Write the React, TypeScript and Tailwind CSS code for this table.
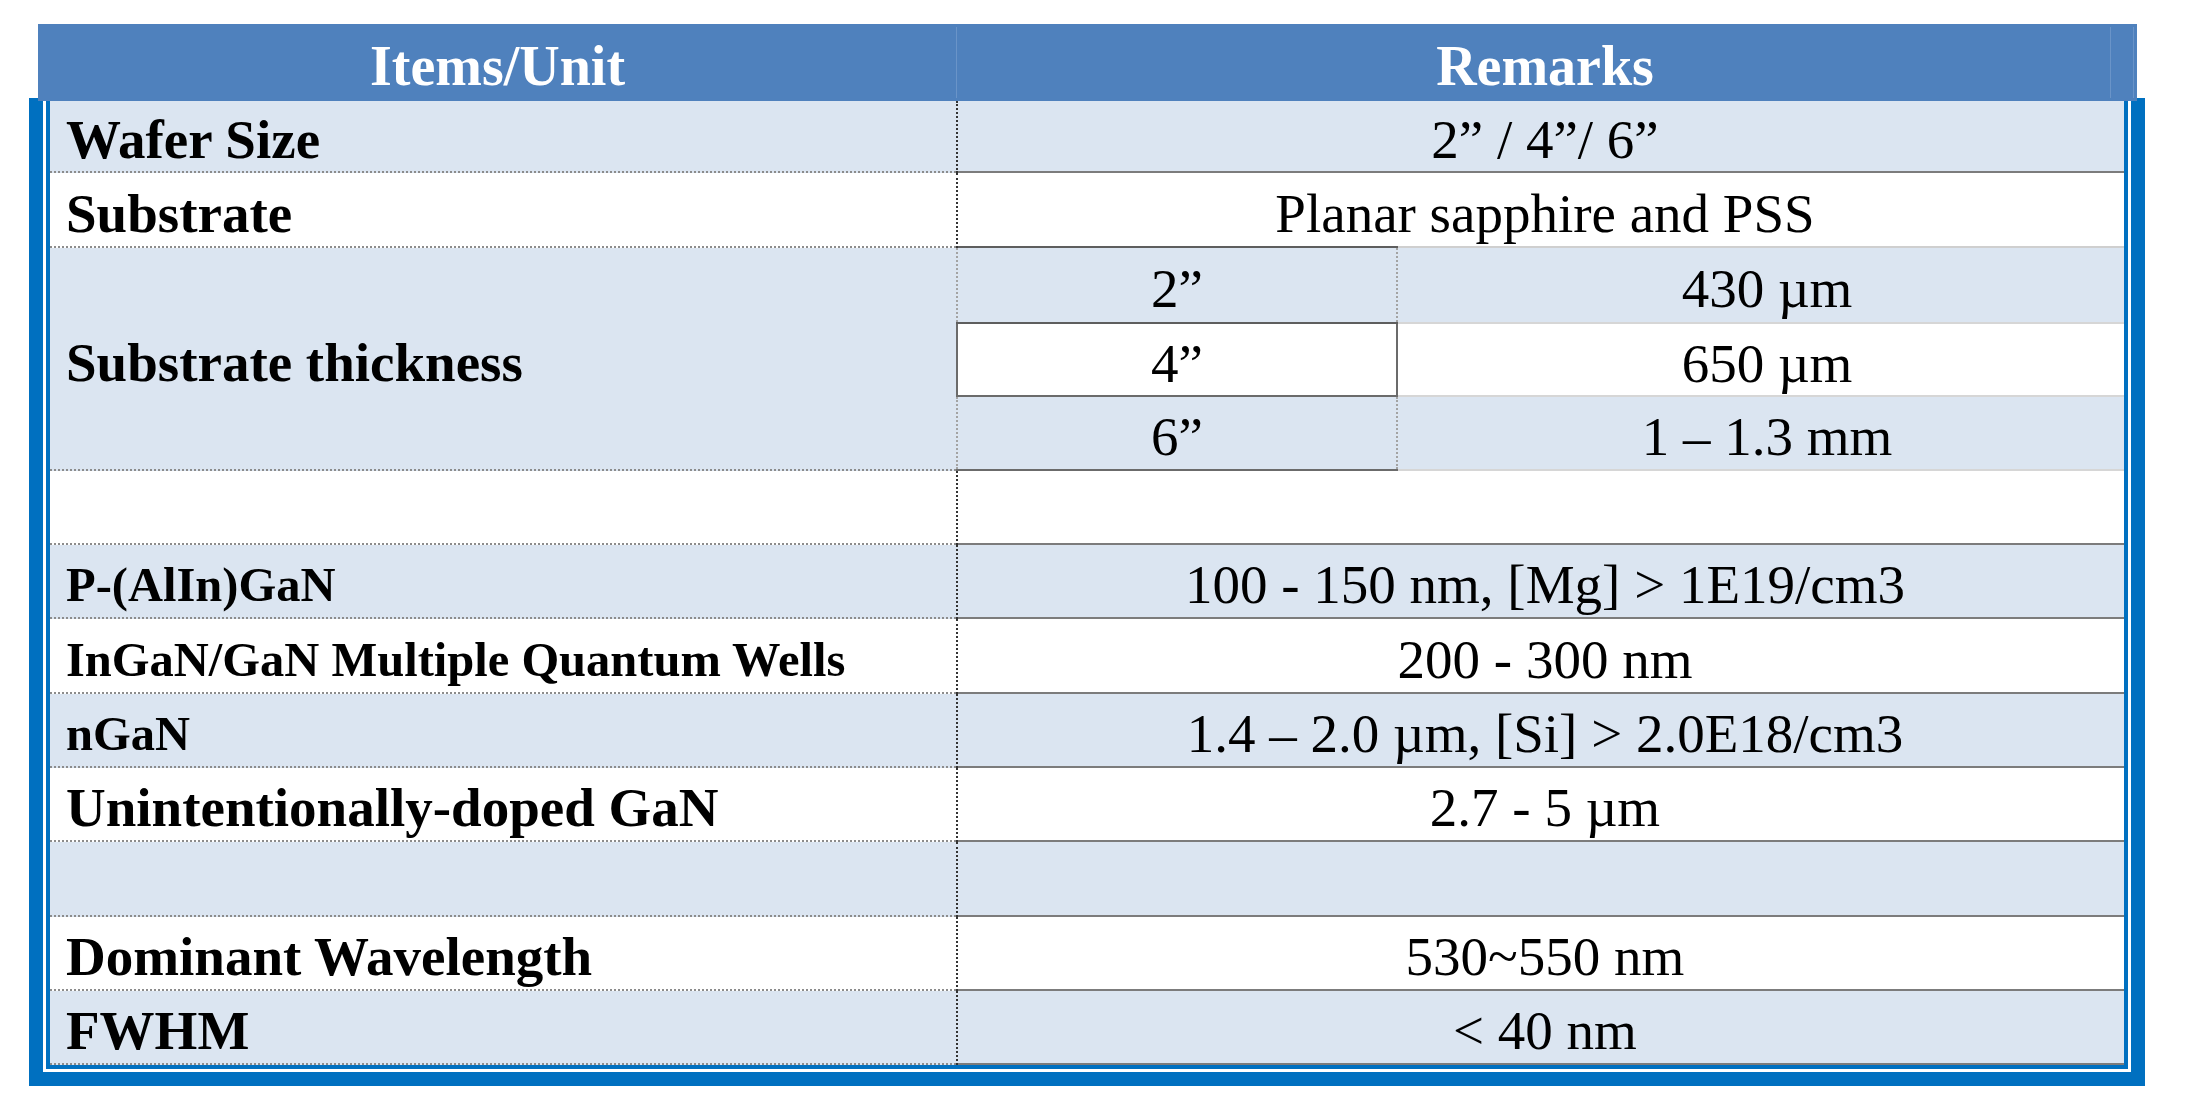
import React from "react";

type Row = {
  label: string;
  value: string;
  small?: boolean;
  bg: string;
  h: string;
};

const LIGHT = "bg-[#DBE5F1]";
const WHITE = "bg-white";

const rowsTop: Row[] = [
  { label: "Wafer Size", value: "2” / 4”/ 6”", bg: LIGHT, h: "h-[72px]" },
];

const rowsBottom: Row[] = [
  { label: "", value: "", bg: WHITE, h: "h-[74px]" },
  { label: "P-(AlIn)GaN", value: "100 - 150 nm, [Mg] > 1E19/cm3", small: true, bg: LIGHT, h: "h-[74px]" },
  { label: "InGaN/GaN Multiple Quantum Wells", value: "200 - 300 nm", small: true, bg: WHITE, h: "h-[75px]" },
  { label: "nGaN", value: "1.4 – 2.0 µm, [Si] > 2.0E18/cm3", small: true, bg: LIGHT, h: "h-[74px]" },
  { label: "Unintentionally-doped GaN", value: "2.7 - 5 µm", bg: WHITE, h: "h-[74px]" },
  { label: "", value: "", bg: LIGHT, h: "h-[75px]" },
  { label: "Dominant Wavelength", value: "530~550 nm", bg: WHITE, h: "h-[74px]" },
  { label: "FWHM", value: "< 40 nm", bg: LIGHT, h: "h-[74px]" },
];

function LeftCell({ label, small }: { label: string; small?: boolean }) {
  return (
    <div
      className={`flex w-[906px] shrink-0 items-center border-b-2 border-dotted border-[#8c8c8c] pl-4 pt-2 font-bold leading-[62px] ${
        small ? "text-[48.5px]" : "text-[55px]"
      }`}
    >
      {label}
    </div>
  );
}

function Divider() {
  return <div className="shrink-0 border-l-2 border-dotted border-[#333333]" />;
}

function StdRow({ r }: { r: Row }) {
  return (
    <div className={`flex ${r.h} ${r.bg}`}>
      <LeftCell label={r.label} small={r.small} />
      <Divider />
      <div className="flex flex-1 items-center justify-center border-b-2 border-[#7c7c7c] pl-[8px] pt-2 text-[55px] leading-[62px]">
        {r.value}
      </div>
    </div>
  );
}

export default function App() {
  return (
    <div className="h-[1106px] w-[2192px] bg-white pt-[24px] font-['Liberation_Serif',serif] text-black">
      {/* Header */}
      <div className="relative z-10 ml-[38px] flex h-[77px] w-[2099px] bg-[#4F81BD] text-[56px] font-bold leading-[62px] text-white">
        <div className="flex w-[919px] items-center justify-center pt-[7px]">Items/Unit</div>
        <div className="flex w-[1176px] items-center justify-center pt-[7px]">Remarks</div>
        <div className="absolute bottom-[3px] left-[918px] top-[3px] w-px bg-[#6a94c8]" />
        <div className="absolute bottom-[3px] left-[2072px] top-[3px] w-px bg-[#6a94c8]" />
        <div className="absolute bottom-[3px] left-[2095px] top-[3px] w-px bg-[#6a94c8]" />
      </div>

      {/* Frame */}
      <div className="-mt-[3px] ml-[29px] w-[2116px] border-x-[14px] border-b-[14px] border-t-[3px] border-[#0070C0] bg-white px-[3px] pb-[3px]">
        <div className="border-x-4 border-b-4 border-[#0070C0]">
          {rowsTop.map((r, i) => (
            <StdRow key={"t" + i} r={r} />
          ))}

          {/* Substrate */}
          <div className="flex h-[75px] bg-white">
            <LeftCell label="Substrate" />
            <Divider />
            <div className="flex flex-1 flex-col">
              <div className="flex flex-1 items-center justify-center pl-[8px] pt-2 text-[55px] leading-[62px]">
                Planar sapphire and PSS
              </div>
              <div className="flex h-[2px]">
                <div className="w-[440px] bg-[#5e5e5e]" />
                <div className="flex-1 bg-[#cfcfcf]" />
              </div>
            </div>
          </div>

          {/* Substrate thickness */}
          <div className="flex h-[223px] bg-[#DBE5F1]">
            <LeftCell label="Substrate thickness" />
            <div className="flex flex-1 flex-col text-[55px] leading-[62px]">
              <div className="flex h-[76px]">
                <div className="w-[442px] border-b-2 border-[#5e5e5e] bg-[#DBE5F1]">
                  <div className="flex h-full items-center justify-center border-x-2 border-dotted border-[#a3a3a3] pt-2">
                    2”
                  </div>
                </div>
                <div className="flex flex-1 items-center justify-center border-b-2 border-[#d6d6d6] bg-[#DBE5F1] pl-[12px] pt-2">
                  430 µm
                </div>
              </div>
              <div className="flex h-[73px]">
                <div className="flex w-[442px] items-center justify-center border-x-2 border-b-2 border-[#6b6b6b] bg-white pt-2">
                  4”
                </div>
                <div className="flex flex-1 items-center justify-center border-b-2 border-[#d6d6d6] bg-white pl-[12px] pt-2">
                  650 µm
                </div>
              </div>
              <div className="flex h-[74px]">
                <div className="w-[442px] border-b-2 border-[#6b6b6b] bg-[#DBE5F1]">
                  <div className="flex h-full items-center justify-center border-x-2 border-dotted border-[#a3a3a3] pt-2">
                    6”
                  </div>
                </div>
                <div className="flex flex-1 items-center justify-center border-b-2 border-[#d6d6d6] bg-[#DBE5F1] pl-[12px] pt-2">
                  1 – 1.3 mm
                </div>
              </div>
            </div>
          </div>

          {rowsBottom.map((r, i) => (
            <StdRow key={"b" + i} r={r} />
          ))}
        </div>
      </div>
    </div>
  );
}
